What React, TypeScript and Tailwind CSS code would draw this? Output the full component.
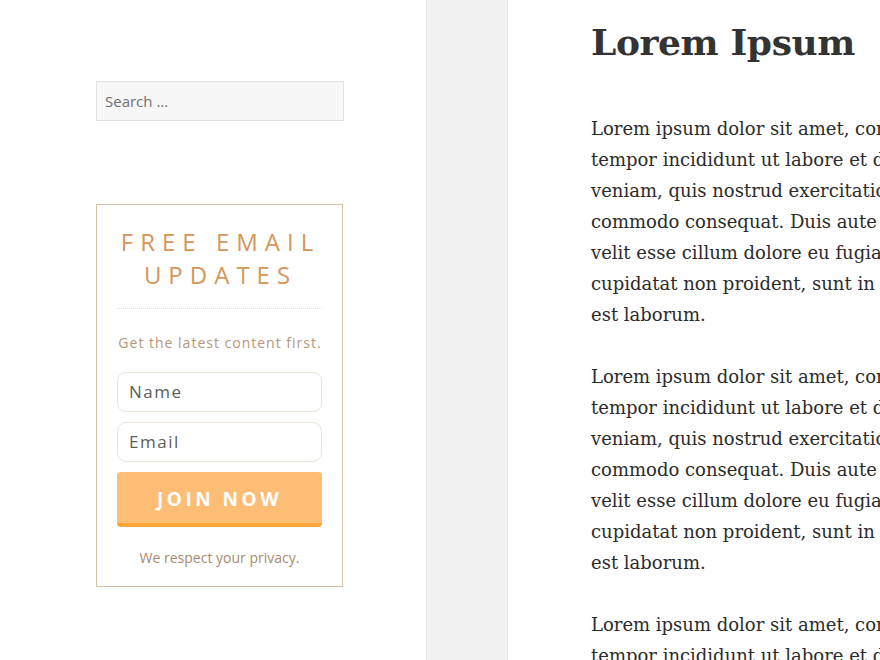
const lines1 = [
  'Lorem ipsum dolor sit amet, consectetur adipiscing elit, sed do eiusmod',
  'tempor incididunt ut labore et dolore magna aliqua. Ut enim ad minim',
  'veniam, quis nostrud exercitation ullamco laboris nisi ut aliquip ex ea',
  'commodo consequat. Duis aute irure dolor in reprehenderit in voluptate',
  'velit esse cillum dolore eu fugiat nulla pariatur. Excepteur sint occaecat',
  'cupidatat non proident, sunt in culpa qui officia deserunt mollit anim id',
  'est laborum.',
];

function Paragraph() {
  return (
    <p className="mb-[31px] text-[18px] leading-[31px] text-[#2b2b2b]">
      {lines1.map((l) => (
        <span key={l} className="block whitespace-nowrap">
          {l}
        </span>
      ))}
    </p>
  );
}

function OptinWidget() {
  return (
    <div className="mt-[83px] w-[247px] border border-[#d6c0a6] bg-white px-5 pt-[20px] pb-[18px] font-['Open_Sans',sans-serif]">
      <h2 className="-mx-4 whitespace-nowrap pl-[2px] text-center text-[24px] leading-[33px] tracking-[7px] text-[#d6955b]">
        FREE EMAIL
        <br />
        UPDATES
      </h2>
      <div className="mt-[17px] border-t border-dotted border-[#dddddd]" />
      <p className="-mx-2 mt-[24px] whitespace-nowrap pl-[1px] text-center text-[14px] leading-5 tracking-[1px] text-[#b3977a]">
        Get the latest content first.
      </p>
      <div className="mt-[19px] flex flex-col gap-[10px]">
        <div className="flex h-10 items-center rounded-[9px] border border-[#ece4d6] px-[11px] text-[17px] tracking-[1.5px] text-[#5d5d5d]">
          Name
        </div>
        <div className="flex h-10 items-center rounded-[9px] border border-[#ece4d6] px-[11px] text-[17px] tracking-[1.5px] text-[#5d5d5d]">
          Email
        </div>
        <button className="flex h-[55px] items-center justify-center rounded-[4px] border-b-4 border-[#fca63c] bg-[#fdbd74] pt-1 text-[19px] font-bold tracking-[3.5px] text-white">
          JOIN NOW
        </button>
      </div>
      <p className="mt-[21px] text-center text-[14px] leading-5 text-[#a88c6e]">We respect your privacy.</p>
    </div>
  );
}

export default function App() {
  return (
    <div className="flex h-[660px] w-[880px] overflow-hidden bg-white">
      <aside className="w-[427px] shrink-0 border-r border-[#e6e6e6] pl-[96px] pt-[81px]">
        <div className="flex h-10 w-[248px] items-center border border-[#e1e1e1] bg-[#f7f7f7] px-2 font-['Open_Sans',sans-serif] text-[15px] text-[#707070]">
          Search …
        </div>
        <OptinWidget />
      </aside>
      <div className="w-[81px] shrink-0 border-r border-[#e6e6e6] bg-[#f1f1f1]" />
      <main className="min-w-0 flex-1 overflow-hidden pl-[83px] pt-[14px] font-['DejaVu_Serif',serif]">
        <h1 className="mb-[43px] whitespace-nowrap text-[36px] font-bold leading-[56px] tracking-[-0.4px] text-[#333333]">
          Lorem Ipsum
        </h1>
        <Paragraph />
        <Paragraph />
        <Paragraph />
      </main>
    </div>
  );
}
